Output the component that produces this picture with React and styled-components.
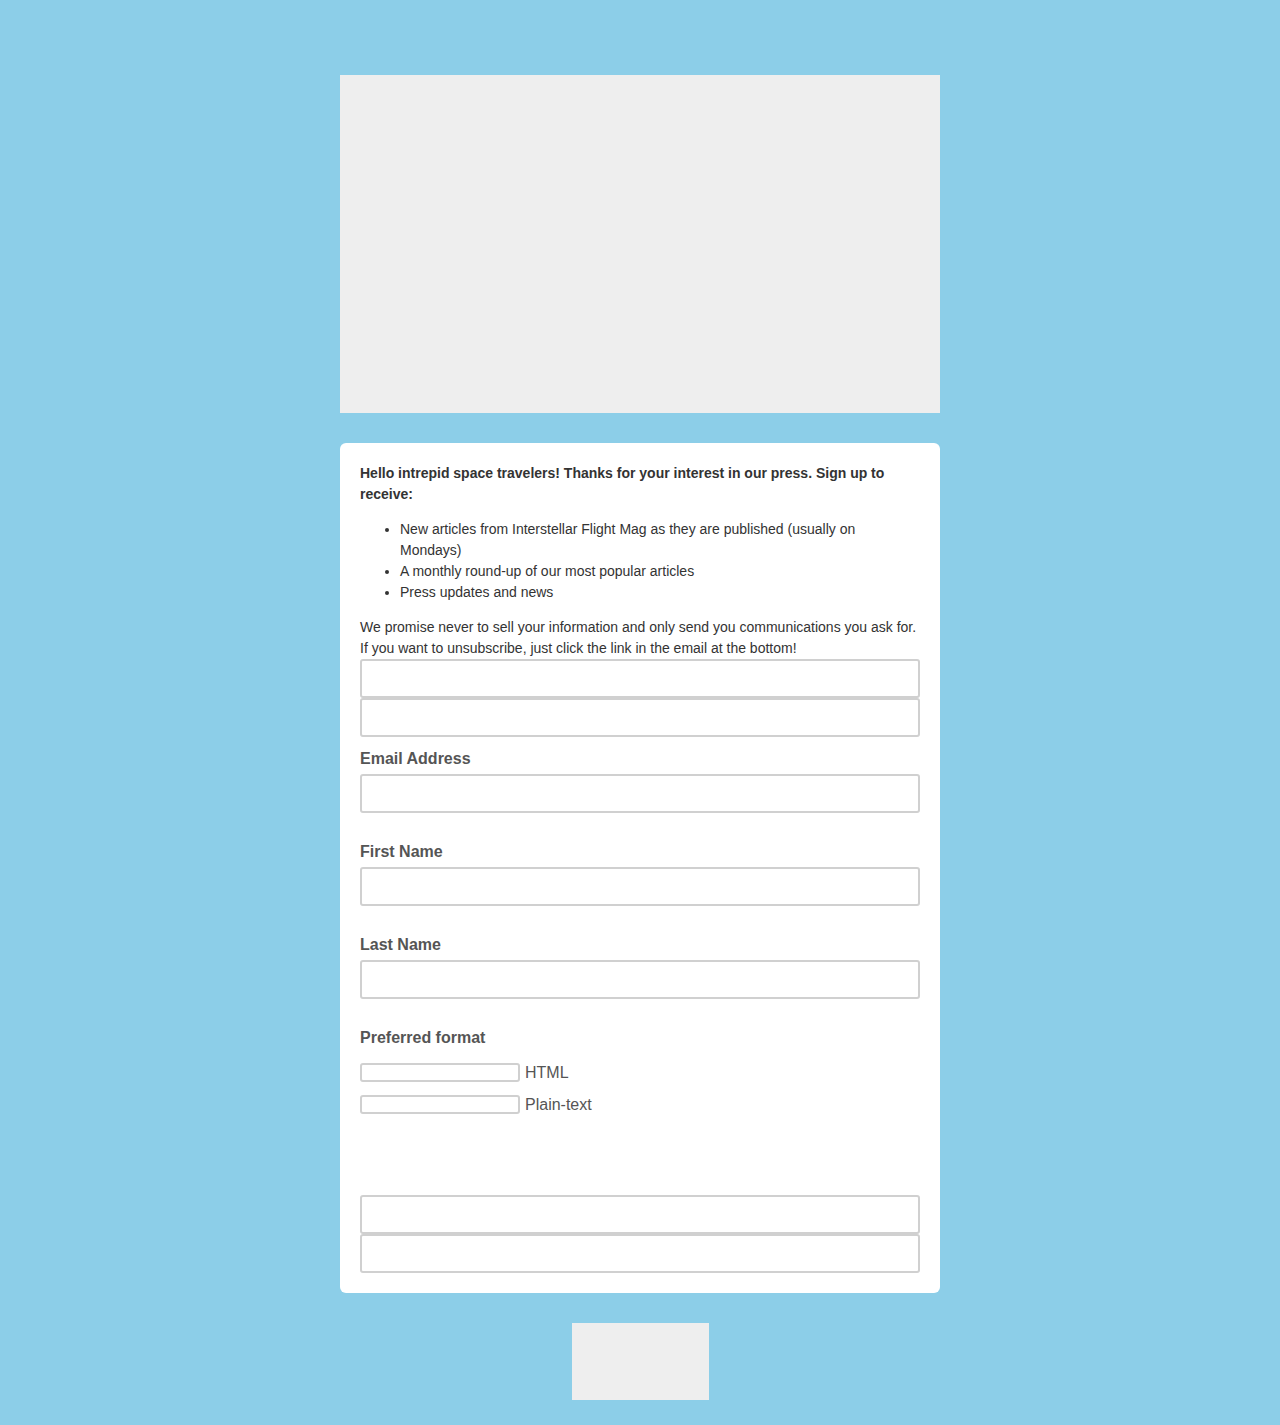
import React from "react";
import styled, { createGlobalStyle } from "styled-components";

const Global = createGlobalStyle`
  html, body { margin: 0; padding: 0; }
  body {
    background: #8ccee8;
    font-family: "Liberation Sans", Arial, Helvetica, sans-serif;
    color: #333;
  }
  * { box-sizing: border-box; }
`;

const Page = styled.div`
  display: flex;
  flex-direction: column;
  align-items: center;
  padding: 75px 0 25px;
`;

const Hero = styled.div`
  width: 600px;
  height: 338px;
  background: #eeeeee;
`;

const Card = styled.div`
  width: 600px;
  margin-top: 30px;
  background: #fff;
  border-radius: 6px;
  padding: 20px;
  display: flex;
  flex-direction: column;
`;

const Intro = styled.p`
  margin: 0;
  font-size: 14px;
  line-height: 21px;
  font-weight: ${(p) => (p.$bold ? 700 : 400)};
  color: #333;
`;

const List = styled.ul`
  margin: 14px 0 14px;
  padding-left: 40px;
  font-size: 14px;
  line-height: 21px;
  color: #333;
`;

const Field = styled.input`
  display: block;
  width: ${(p) => p.$w || "100%"};
  height: ${(p) => p.$h || "39px"};
  margin: 0;
  padding: 0 8px;
  border: 2px solid #d0d0d0;
  border-radius: 3px;
  background: #fff;
  font-family: inherit;
  font-size: 14px;
  outline: none;
`;

const Group = styled.div`
  display: flex;
  flex-direction: column;
  margin-top: ${(p) => p.$top || "28px"};
`;

const Label = styled.label`
  display: block;
  font-size: 16px;
  line-height: 22px;
  font-weight: 700;
  color: #555;
  margin-bottom: 4px;
`;

const Options = styled.div`
  display: flex;
  flex-direction: column;
  gap: 13px;
  margin-top: 10px;
`;

const Option = styled.div`
  display: flex;
  align-items: center;
  gap: 5px;
  font-size: 16px;
  line-height: 19px;
  color: #555;
`;

const Spacer = styled.div`
  height: 81px;
`;

const Footer = styled.div`
  width: 137px;
  height: 77px;
  margin-top: 30px;
  background: #eeeeee;
`;

export default function App() {
  return (
    <>
      <Global />
      <Page>
        <Hero />
        <Card>
          <Intro $bold>
            Hello intrepid space travelers! Thanks for your interest in our press. Sign up to receive:
          </Intro>
          <List>
            <li>New articles from Interstellar Flight Mag as they are published (usually on Mondays)</li>
            <li>A monthly round-up of our most popular articles</li>
            <li>Press updates and news</li>
          </List>
          <Intro>
            We promise never to sell your information and only send you communications you ask for. If you want to unsubscribe, just click the link in the email at the bottom!
          </Intro>
          <Field type="text" />
          <Field type="text" />
          <Group $top="11px">
            <Label>Email Address</Label>
            <Field type="email" />
          </Group>
          <Group>
            <Label>First Name</Label>
            <Field type="text" />
          </Group>
          <Group>
            <Label>Last Name</Label>
            <Field type="text" />
          </Group>
          <Group>
            <Label>Preferred format</Label>
            <Options>
              <Option>
                <Field type="text" $w="160px" $h="19px" />
                HTML
              </Option>
              <Option>
                <Field type="text" $w="160px" $h="19px" />
                Plain-text
              </Option>
            </Options>
          </Group>
          <Spacer />
          <Field type="text" />
          <Field type="text" />
        </Card>
        <Footer />
      </Page>
    </>
  );
}
